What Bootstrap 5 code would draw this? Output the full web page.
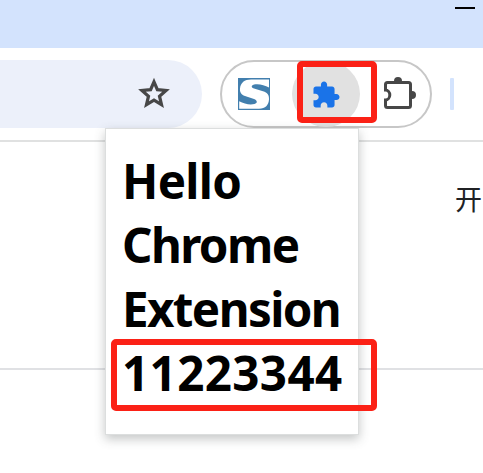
<!DOCTYPE html>
<html lang="zh-CN">
<head>
<meta charset="utf-8">
<meta name="viewport" content="width=device-width, initial-scale=1">
<title>Hello Chrome Extension</title>
<link rel="stylesheet" href="https://cdn.jsdelivr.net/npm/bootstrap@5.3.0/dist/css/bootstrap.min.css">
<style>
body{width:483px;height:473px;font-family:"Noto Sans","Open Sans",sans-serif}
svg{display:block;flex:none}
.titlebar{height:48px;background:#d3e3fd;padding:7px 8px 0 0}
.minimise{width:20px;height:2px;background:#000}
.toolbar{height:94px;padding-top:12px;border-bottom:2px solid #e0e1e1}
.address{width:202px;height:68px;padding-right:31px;border-radius:0 34px 34px 0;background:#ecf0fa}
.actions{width:212px;height:68px;margin-left:18px;padding-left:16px;border:2px solid #c7c7c7;border-radius:34px}
.active-ext{width:68px;height:66px;margin-left:22px;border-radius:50%;background:#e1e1e1}
.divider{width:4px;height:32px;margin:18px 0 0 18px;border-radius:1px;background:#d3e3fd}
.page-head{height:228px;padding:39px 0 0 455px;border-bottom:2px solid #e0e1e4;font:27px/36px "Noto Sans CJK SC",sans-serif;color:#202124;white-space:nowrap}
.popup{left:105px;top:128px;width:254px;height:307px;padding:20px 0 0 16px;border:1px solid #dcdede;box-shadow:0 4px 10px rgba(60,65,65,.3)}
.popup h1{margin:0;font-size:47.5px;line-height:64px;font-weight:700;color:#000;white-space:nowrap}
.w-hello{letter-spacing:-.7px}
.w-chrome{letter-spacing:-1.6px}
.w-extension{letter-spacing:-1.6px}
.w-digits{letter-spacing:.4px}
.marker{border:6px solid #fb2116;border-radius:5px}
.marker-icon{left:297px;top:61px;width:80px;height:62px}
.marker-text{left:111px;top:339px;width:266px;height:72px}
</style>
<script src="https://cdn.jsdelivr.net/npm/bootstrap@5.3.0/dist/js/bootstrap.bundle.min.js"></script>
</head>
<body class="position-relative overflow-hidden bg-white">
<header>
  <div class="titlebar d-flex justify-content-end align-items-start"><div class="minimise"></div></div>
  <div class="toolbar d-flex align-items-start">
    <div class="address d-flex align-items-center justify-content-end">
      <svg width="34" height="34" viewBox="0 0 34 34" fill="none" stroke="#474747" stroke-width="3.2"><path d="M17 4.800 20.400 12.700 29 13.500 22.500 19.200 24.500 27.600 17 23.100 9.500 27.600 11.500 19.200 5 13.500 13.600 12.700Z"/></svg>
    </div>
    <div class="actions d-flex align-items-center">
      <svg width="32" height="32" viewBox="0 0 32 32"><path fill="#427fae" d="M0 0H32V32H0Z"/><path fill="#fff" d="M31 1.500V9.500C27 7.200 22 5.800 17.500 6.200C13.200 6.600 12.500 9.300 16 10.500L25 13.200C29.500 14.600 31.300 17 31 21.500C30.600 27 27.500 30.700 21 30.700H1.200V23.300C6 26 12 27 16.500 26C19.800 25.200 19.500 22.200 16 21L7 18C3 16.600 1.700 14 2 10.500C2.500 4.800 6.500 1.500 13 1.500Z"/></svg>
      <div class="active-ext d-flex align-items-center justify-content-center">
        <svg width="27" height="27" viewBox="1.600 .6 21.800 21.800"><path fill="#1a73e8" d="M20.500 11H19V7c0-1.100-.9-2-2-2h-4V3.500C13 2.120 11.880 1 10.500 1S8 2.120 8 3.500V5H4c-1.100 0-2 .9-2 2v3.800h1.500c1.490 0 2.700 1.210 2.700 2.700s-1.210 2.700-2.700 2.700H2V20c0 1.100.9 2 2 2h3.800v-1.500c0-1.490 1.210-2.700 2.700-2.700s2.700 1.210 2.700 2.700V22H17c1.100 0 2-.9 2-2v-4h1.500c1.380 0 2.500-1.120 2.500-2.500S21.880 11 20.500 11z"/></svg>
      </div>
      <svg class="ms-4" width="32" height="34" viewBox="0 0 32 34"><path d="M3.500 5.500H24.500Q26.500 5.500 26.500 7.500V28.500Q26.500 30.500 24.500 30.500H3.500Q1.500 30.500 1.500 28.500V23C3.700 23 5.800 20.800 5.800 18S3.700 13 1.500 13V7.500Q1.500 5.500 3.500 5.500Z" fill="none" stroke="#474747" stroke-width="3"/><path fill="#474747" d="M10 5V4A4 4 0 0 1 18 4V5ZM27 14H28A4 4 0 0 1 28 22H27Z"/></svg>
    </div>
    <div class="divider"></div>
  </div>
</header>
<main><div class="page-head">开</div></main>
<section class="popup position-absolute bg-white">
  <h1><span class="w-hello">Hello</span><br><span class="w-chrome">Chrome</span><br><span class="w-extension">Extension</span><br><span class="w-digits">11223344</span></h1>
</section>
<div class="marker marker-icon position-absolute"></div>
<div class="marker marker-text position-absolute"></div>
</body>
</html>
